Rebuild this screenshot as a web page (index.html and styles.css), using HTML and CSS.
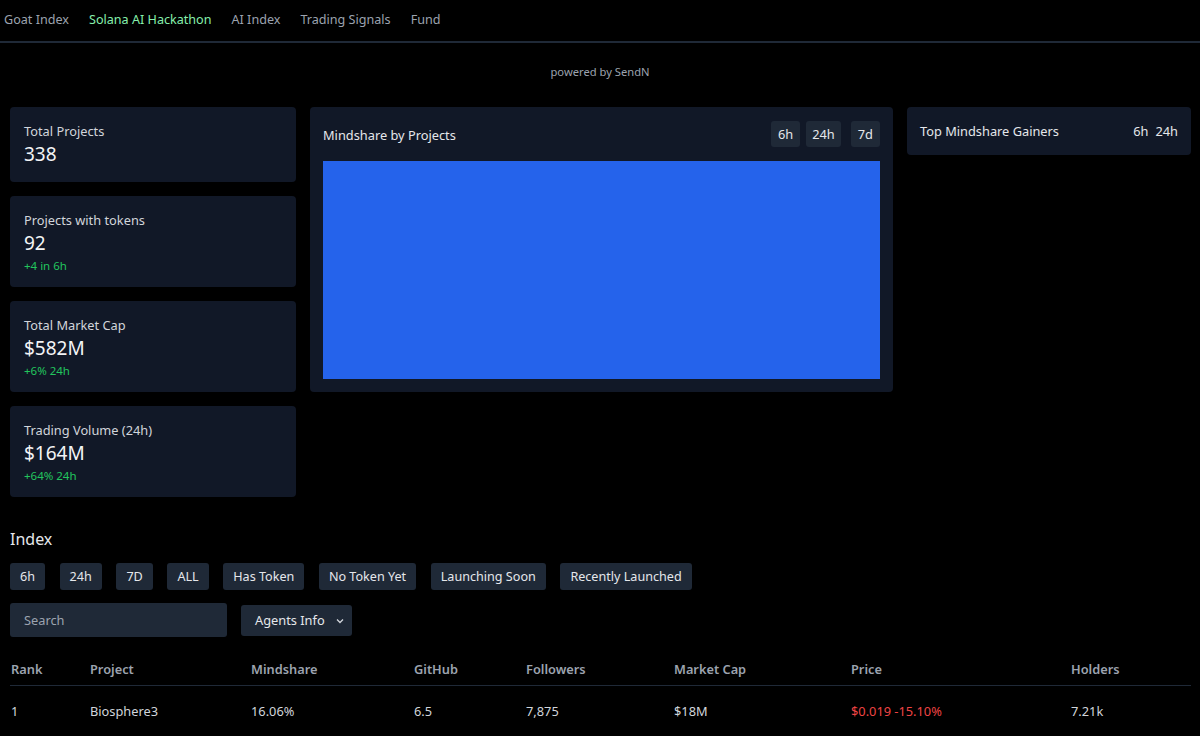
FILE: index.html
```html
<!DOCTYPE html>
<html lang="en">
<head>
<meta charset="utf-8">
<title>Solana AI Hackathon</title>
<link rel="stylesheet" href="styles.css">
</head>
<body>
<nav class="nav">
  <a class="nav-link">Goat Index</a>
  <a class="nav-link active">Solana AI Hackathon</a>
  <a class="nav-link">AI Index</a>
  <a class="nav-link">Trading Signals</a>
  <a class="nav-link">Fund</a>
</nav>
<div class="powered">powered by SendN</div>
<main class="main">
  <section class="grid">
    <div class="stats">
      <div class="card stat stat-single">
        <div class="stat-label">Total Projects</div>
        <div class="stat-value">338</div>
      </div>
      <div class="card stat">
        <div class="stat-label">Projects with tokens</div>
        <div class="stat-value">92</div>
        <div class="stat-change">+4 in 6h</div>
      </div>
      <div class="card stat">
        <div class="stat-label">Total Market Cap</div>
        <div class="stat-value">$582M</div>
        <div class="stat-change">+6% 24h</div>
      </div>
      <div class="card stat">
        <div class="stat-label">Trading Volume (24h)</div>
        <div class="stat-value">$164M</div>
        <div class="stat-change">+64% 24h</div>
      </div>
    </div>
    <div class="card chart-card">
      <div class="chart-head">
        <div class="chart-title">Mindshare by Projects</div>
        <div class="chart-tabs">
          <span class="tab">6h</span>
          <span class="tab">24h</span>
          <span class="tab">7d</span>
        </div>
      </div>
      <div class="chart-area"></div>
    </div>
    <div class="side">
      <div class="card gainers">
        <div class="gainers-title">Top Mindshare Gainers</div>
        <div class="gainers-tabs"><span>6h</span><span>24h</span></div>
      </div>
    </div>
  </section>

  <section class="index">
    <h2 class="index-title">Index</h2>
    <div class="filters">
      <span class="chip">6h</span>
      <span class="chip">24h</span>
      <span class="chip">7D</span>
      <span class="chip">ALL</span>
      <span class="chip">Has Token</span>
      <span class="chip">No Token Yet</span>
      <span class="chip">Launching Soon</span>
      <span class="chip">Recently Launched</span>
    </div>
    <div class="controls">
      <div class="search">Search</div>
      <div class="select">Agents Info <svg class="caret" width="8" height="6" viewBox="0 0 8 6"><path d="M1 1.5 L4 4.5 L7 1.5" fill="none" stroke="#d1d5db" stroke-width="1.3"/></svg></div>
    </div>
    <table class="table">
      <thead>
        <tr>
          <th class="c-rank">Rank</th>
          <th class="c-proj">Project</th>
          <th class="c-mind">Mindshare</th>
          <th class="c-git">GitHub</th>
          <th class="c-fol">Followers</th>
          <th class="c-cap">Market Cap</th>
          <th class="c-price">Price</th>
          <th class="c-hold">Holders</th>
        </tr>
      </thead>
      <tbody>
        <tr>
          <td>1</td>
          <td>Biosphere3</td>
          <td>16.06%</td>
          <td>6.5</td>
          <td>7,875</td>
          <td>$18M</td>
          <td class="neg">$0.019 -15.10%</td>
          <td>7.21k</td>
        </tr>
      </tbody>
    </table>
  </section>
</main>
</body>
</html>
```

FILE: styles.css
```css
* { box-sizing: border-box; }
html, body { margin: 0; padding: 0; background: #000; }
body {
  font-family: "Noto Sans", "Open Sans", sans-serif;
  color: #e5e7eb;
  width: 1200px;
  height: 736px;
  overflow: hidden;
}
.nav {
  display: flex;
  gap: 20px;
  height: 43px;
  align-items: center;
  padding: 0 4px 2px;
  border-bottom: 2px solid #1f2937;
}
.nav-link {
  font-size: 12.6px;
  color: #9ca3af;
  white-space: nowrap;
}
.nav-link.active { color: #86efac; }
.powered {
  text-align: center;
  font-size: 11.2px;
  color: #9ca3af;
  padding-top: 21px;
  height: 64px;
}
.main { padding: 0 9px 0 10px; }
.grid {
  display: grid;
  grid-template-columns: 286px 583px 284px;
  gap: 14px;
  align-items: start;
}
.card {
  background: #111827;
  border-radius: 4px;
}
.stats {
  display: flex;
  flex-direction: column;
  gap: 14px;
}
.stat {
  padding: 15px 14px 12px;
}
.stat-single { padding-bottom: 14px; }
.stat-label {
  font-size: 12.8px;
  color: #d1d5db;
  line-height: 18px;
}
.stat-value {
  font-size: 19px;
  color: #f3f4f6;
  line-height: 28px;
}
.stat-change {
  font-size: 11.5px;
  color: #22c55e;
  line-height: 18px;
}
.chart-card {
  padding: 14px 13px 13px;
}
.chart-head {
  display: flex;
  justify-content: space-between;
  align-items: center;
  margin-bottom: 14px;
}
.chart-title {
  font-size: 12.8px;
  color: #e5e7eb;
  padding-top: 2px;
}
.chart-tabs { display: flex; gap: 6px; }
.tab {
  background: #1f2937;
  color: #e5e7eb;
  font-size: 12.8px;
  border-radius: 3px;
  padding: 0 7px;
  height: 26px;
  line-height: 26px;
}
.tab:nth-child(2) { padding: 0 6px; }
.tab:last-child { margin-left: 4px; }
.chart-area {
  background: #2563eb;
  height: 218px;
}
.gainers {
  display: flex;
  justify-content: space-between;
  align-items: center;
  padding: 0 13px;
  height: 48px;
}
.gainers-title { font-size: 12.8px; color: #e5e7eb; }
.gainers-tabs { display: flex; gap: 7px; font-size: 12.8px; color: #e5e7eb; }
.index { padding-top: 31px; }
.index-title {
  margin: 0 0 13px;
  font-size: 16px;
  font-weight: 400;
  color: #e5e7eb;
  line-height: 22px;
}
.filters {
  display: flex;
  gap: 14.6px;
}
.chip {
  background: #1f2937;
  color: #e5e7eb;
  font-size: 12.6px;
  border-radius: 3px;
  height: 27px;
  line-height: 27px;
  padding: 0 10px;
  white-space: nowrap;
}
.controls {
  display: flex;
  gap: 14px;
  align-items: center;
  margin-top: 13px;
}
.search {
  width: 217px;
  height: 34px;
  background: #1f2937;
  border-radius: 3px;
  color: #9ca3af;
  font-size: 12.8px;
  padding: 0 14px;
  line-height: 34px;
}
.select {
  width: 111px;
  height: 31px;
  background: #1f2937;
  border-radius: 3px;
  color: #e5e7eb;
  font-size: 12.8px;
  padding: 0 8px 0 14px;
  display: flex;
  align-items: center;
  justify-content: space-between;
}
.caret { margin-top: 1px; }
.table {
  margin-top: 17px;
  width: 1181px;
  border-collapse: collapse;
  font-size: 12.8px;
}
.table th {
  text-align: left;
  font-weight: 600;
  color: #9ca3af;
  padding: 6px 0 7px 1px;
  border-bottom: 1px solid #1f2937;
}
.table td {
  padding: 16px 0 8px 1px;
  color: #d1d5db;
}
.table .neg { color: #ef4444; }
.c-rank { width: 79px; }
.c-proj { width: 161px; }
.c-mind { width: 163px; }
.c-git { width: 112px; }
.c-fol { width: 148px; }
.c-cap { width: 177px; }
.c-price { width: 220px; }
```
